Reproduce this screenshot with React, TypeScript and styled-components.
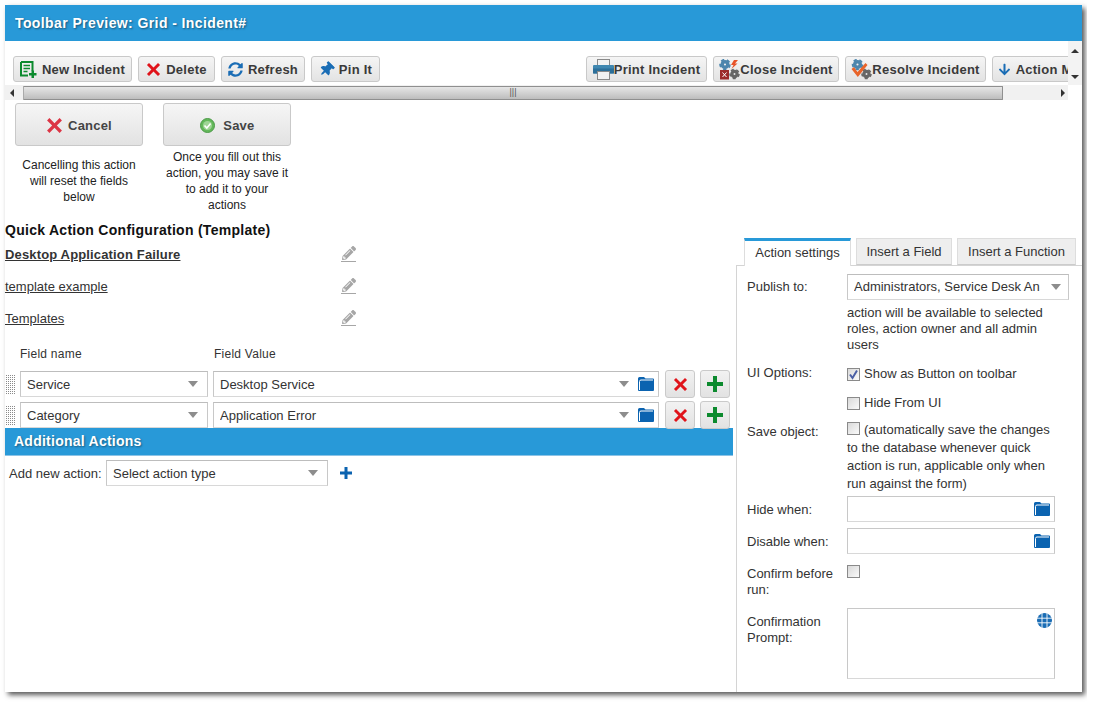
import React from 'react';
import styled, { createGlobalStyle } from 'styled-components';
import { FaArrowDown, FaPencilAlt, FaSyncAlt, FaThumbtack } from 'react-icons/fa';

const GlobalStyle = createGlobalStyle`
  html, body {
    margin: 0;
    background: #fff;
    font-family: "Liberation Sans", Arial, sans-serif;
    color: #333;
  }
`;

const CrossIcon = ({ size, color }: { size: number; color: string }) => (
  <svg width={size} height={size} viewBox="0 0 16 16">
    <path d="M3.200 1 8 5.800 12.800 1 15 3.200 10.200 8 15 12.800 12.800 15 8 10.200 3.200 15 1 12.800 5.800 8 1 3.200Z" fill={color} />
  </svg>
);

const PlusIcon = ({ size, color }: { size: number; color: string }) => (
  <svg width={size} height={size} viewBox="0 0 16 16">
    <path d="M6 0h4v6h6v4h-6v6H6v-6H0V6h6Z" fill={color} />
  </svg>
);

const FolderIcon = () => (
  <svg width="16" height="14" viewBox="0 0 16 14">
    <path d="M1.500 0H6l1.500 1.500H15a1 1 0 0 1 1 1V13a1 1 0 0 1-1 1H1a1 1 0 0 1-1-1V1.500A1.500 1.500 0 0 1 1.500 0Z" fill="#0b63b0" />
    <path d="M1.500 13V4.500A1.500 1.500 0 0 1 3 3h12" fill="none" stroke="#fff" strokeWidth="1" />
  </svg>
);

const GlobeIcon = () => (
  <svg width="15" height="15" viewBox="0 0 15 15">
    <circle cx="7.500" cy="7.500" r="7.500" fill="#1a6db5" />
    <path d="M0 5.200h15M0 9.800h15M5 0v15M10 0v15" stroke="#fff" strokeWidth="0.900" />
  </svg>
);

const NewDocIcon = () => (
  <svg width="17" height="17" viewBox="0 0 17 17">
    <path d="M1 1h11.500v9M8 14.500H1V1" fill="none" stroke="#0c8a2e" strokeWidth="2" />
    <path d="M3.500 4.500h6.500M3.500 7.500h6.500M3.500 10.500h4" stroke="#0c8a2e" strokeWidth="1.500" />
    <path d="M11.500 9.500h2.500v2.500h2.500v2.500H14V17h-2.500v-2.500H9V12h2.500Z" fill="#0c8a2e" />
  </svg>
);

const PrinterIcon = () => (
  <svg width="21" height="21" viewBox="0 0 21 21">
    <rect x="4.500" y="0.500" width="12" height="7" fill="#f2f2f2" stroke="#8a8a8a" />
    <rect x="0" y="6" width="21" height="8.500" rx="1" fill="#3f87b0" />
    <rect x="0" y="9.500" width="21" height="5" fill="#2c6f99" />
    <rect x="4.500" y="12.500" width="12" height="8" fill="#f2f2f2" stroke="#8a8a8a" />
  </svg>
);

const Gear = ({ cx, cy, r, color }: { cx: number; cy: number; r: number; color: string }) => (
  <g>
    <circle cx={cx} cy={cy} r={r * 0.8} fill="none" stroke={color} strokeWidth={r} />
    <circle cx={cx} cy={cy} r={r * 1.4} fill="none" stroke={color} strokeWidth={r * 0.5} strokeDasharray={`${r * 0.95} ${r * 0.8}`} />
  </g>
);

const CloseGearsIcon = () => (
  <svg width="21" height="21" viewBox="0 0 21 21">
    <Gear cx={6} cy={5.500} r={3.500} color="#4c86ad" />
    <Gear cx={15.500} cy={15} r={3.200} color="#666" />
    <path d="M15 1h4l-3 3.500h2.500L12.500 10l2-4h-2.500Z" fill="#e8542a" />
    <rect x="1" y="11" width="9" height="9.500" fill="#9c2a2a" />
    <path d="M3.500 13.500l4 4.500M7.500 13.500l-4 4.500" stroke="#fff" strokeWidth="1" />
  </svg>
);

const ResolveGearsIcon = () => (
  <svg width="21" height="21" viewBox="0 0 21 21">
    <Gear cx={6.500} cy={5.500} r={3.500} color="#4c86ad" />
    <Gear cx={15.500} cy={15} r={3.200} color="#666" />
    <path d="M0.500 10 3 8l3.500 5 8-9 2 2L6.800 18Z" fill="#e8642a" />
  </svg>
);

const SaveIcon = () => (
  <svg width="15" height="15" viewBox="0 0 15 15">
    <circle cx="7.500" cy="7.500" r="7" fill="#63b85a" stroke="#4c9a48" />
    <circle cx="7.500" cy="7.500" r="4.500" fill="#9fd596" />
    <path d="M4.500 7.500 6.800 10l3.800-4.600" fill="none" stroke="#fff" strokeWidth="1.600" />
  </svg>
);

const PencilWithLine = () => (
  <PencilWrap>
    <FaPencilAlt size={14} color="#a6a6a6" />
  </PencilWrap>
);

const Page = styled.div`
  padding: 5px;
  width: 1077px;
  height: 697px;
  overflow: hidden;
`;

const Window = styled.div`
  width: 1077px;
  height: 687px;
  background: #fff;
  box-shadow: 3px 3px 5px rgba(0, 0, 0, 0.65);
  display: flex;
  flex-direction: column;
`;

const TitleBar = styled.div`
  height: 36px;
  flex: none;
  background: #2899d8;
  color: #fff;
  font-size: 14px;
  font-weight: bold;
  line-height: 36px;
  padding-left: 10px;
  letter-spacing: 0.4px;
  text-shadow: 1px 1px 2px rgba(0, 0, 0, 0.45);
`;

const ToolbarArea = styled.div`
  height: 59px;
  flex: none;
  display: grid;
  grid-template-columns: minmax(0, 1fr) 14px;
  grid-template-rows: 44px 15px;
`;

const Toolbar = styled.div`
  display: flex;
  padding: 15px 0 0 8px;
  gap: 6px;
  overflow: hidden;
  min-width: 0;
`;

const ToolGroup = styled.div<{ $offset?: number }>`
  display: flex;
  flex: none;
  gap: 6px;
  margin-left: ${(p) => p.$offset ?? 0}px;
`;

const ToolButton = styled.div<{ $width: number; $tight?: boolean }>`
  flex: none;
  box-sizing: border-box;
  width: ${(p) => p.$width}px;
  height: 26px;
  padding-top: 1px;
  border: 1px solid #c9c9c9;
  border-radius: 3px;
  background: linear-gradient(#f5f5f5, #e3e3e3);
  display: flex;
  align-items: center;
  justify-content: center;
  gap: ${(p) => (p.$tight ? 0 : 5)}px;
  font-size: 13px;
  font-weight: bold;
  letter-spacing: 0.25px;
  color: #3a3a3a;
  white-space: nowrap;
`;

const VScroll = styled.div`
  background: #f3f3f3;
  display: flex;
  flex-direction: column;
  align-items: center;
  justify-content: space-between;
  padding: 8px 1px 6px 0;
  box-sizing: border-box;
`;

const HScroll = styled.div`
  grid-column: 1 / 3;
  display: flex;
  align-items: center;
  background: #f1f1f1;
  height: 15px;
  width: 1063px;
`;

const Thumb = styled.div`
  width: 980px;
  height: 14px;
  box-sizing: border-box;
  border: 1px solid #8f8f8f;
  border-left-color: #aaa;
  border-radius: 1px;
  background: linear-gradient(#e6e6e6, #bdbdbd);
  display: flex;
  align-items: center;
  justify-content: center;
  color: #555;
  font-size: 9px;
  line-height: 1;
`;

const Arrow = styled.span<{ $dir: 'left' | 'right' | 'up' | 'down' }>`
  width: 0;
  height: 0;
  flex: none;
  border-style: solid;
  border-color: transparent;
  ${(p) =>
    p.$dir === 'left'
      ? 'border-width: 4px 4px 4px 0; border-right-color: #333; margin-left: 5px; margin-right: 9px;'
      : p.$dir === 'right'
      ? 'border-width: 4px 0 4px 4px; border-left-color: #333; margin-left: 58px;'
      : p.$dir === 'up'
      ? 'border-width: 0 4px 4px; border-bottom-color: #333;'
      : 'border-width: 4px 4px 0; border-top-color: #333;'}
`;

const Body = styled.div`
  flex: 1;
  display: flex;
  flex-direction: column;
  min-height: 0;
`;

const ActionsRow = styled.div`
  display: flex;
  gap: 20px;
  padding: 3px 0 0 10px;
  height: 122px;
  box-sizing: border-box;
  flex: none;
`;

const ActionCol = styled.div`
  width: 128px;
  display: flex;
  flex-direction: column;
  align-items: center;
`;

const BigButton = styled.div`
  width: 128px;
  height: 43px;
  padding-top: 1px;
  box-sizing: border-box;
  border: 1px solid #c9c9c9;
  border-radius: 3px;
  background: linear-gradient(#f6f6f6, #e2e2e2);
  display: flex;
  align-items: center;
  justify-content: center;
  gap: 5px;
  font-size: 13px;
  font-weight: bold;
  letter-spacing: 0.2px;
  color: #444;
`;

const Caption = styled.div<{ $top: number }>`
  margin-top: ${(p) => p.$top}px;
  width: 128px;
  text-align: center;
  font-size: 12px;
  line-height: 16px;
  color: #222;
`;

const Columns = styled.div`
  flex: 1;
  display: flex;
  min-height: 0;
`;

const LeftColumn = styled.div`
  width: 731px;
  flex: none;
`;

const Heading = styled.div`
  font-size: 14px;
  font-weight: bold;
  color: #111;
  line-height: 16px;
  margin-bottom: 8px;
  letter-spacing: 0.28px;
`;

const TemplateRow = styled.div`
  width: 351px;
  height: 32px;
  display: flex;
  justify-content: space-between;
  align-items: flex-start;
`;

const TemplateLink = styled.a<{ $bold?: boolean }>`
  font-size: 13px;
  font-weight: ${(p) => (p.$bold ? 'bold' : 'normal')};
  letter-spacing: ${(p) => (p.$bold ? 0.15 : 0)}px;
  text-decoration: underline;
  color: #333;
  line-height: 18px;
`;

const PencilWrap = styled.span`
  display: flex;
  flex-direction: column;
  align-items: center;
  width: 15px;
  height: 15px;
  border-bottom: 1px solid #a6a6a6;
`;

const FieldHeader = styled.div`
  display: flex;
  padding-left: 15px;
  font-size: 12px;
  line-height: 16px;
  height: 25px;
  margin-top: 4px;
  color: #333;
  letter-spacing: 0.25px;
`;

const FieldHeaderCell = styled.div<{ $width: number }>`
  width: ${(p) => p.$width}px;
`;

const FieldList = styled.div`
  display: flex;
  flex-direction: column;
  gap: 5px;
`;

const FieldRow = styled.div`
  display: flex;
  align-items: center;
  height: 26px;
`;

const Grip = styled.span`
  width: 10px;
  height: 20px;
  margin: 0 4px 0 1px;
  flex: none;
  background:
    repeating-linear-gradient(90deg, transparent 0 1px, #fff 1px 2px),
    repeating-linear-gradient(0deg, #8a8a8a 0 1px, #fff 1px 2px);
`;

const SelectBox = styled.div<{ $width: number; $left?: number }>`
  box-sizing: border-box;
  width: ${(p) => p.$width}px;
  height: 26px;
  flex: none;
  margin-left: ${(p) => p.$left ?? 0}px;
  border: 1px solid #c8c8c8;
  border-top-color: #bdbdbd;
  border-bottom-color: #d8d8d8;
  background: #fff;
  display: flex;
  align-items: center;
  padding: 0 4px 0 6px;
  font-size: 13px;
  color: #333;
  white-space: nowrap;
`;

const SelectText = styled.span`
  flex: 1;
  overflow: hidden;
`;

const Caret = styled.span<{ $gap?: number }>`
  width: 0;
  height: 0;
  flex: none;
  margin: 0 ${(p) => p.$gap ?? 5}px 0 0;
  border-style: solid;
  border-width: 6px 5px 0;
  border-color: #8d8d8d transparent transparent;
`;

const SquareButton = styled.div<{ $left: number }>`
  width: 30px;
  height: 28px;
  box-sizing: border-box;
  flex: none;
  margin-left: ${(p) => p.$left}px;
  border: 1px solid #cacaca;
  border-radius: 3px;
  background: linear-gradient(#f2f2f2, #e2e2e2);
  display: flex;
  align-items: center;
  justify-content: center;
`;

const SectionBar = styled.div`
  height: 28px;
  box-sizing: border-box;
  width: 728px;
  background: #2899d8;
  border-bottom: 1px solid #8cc3e6;
  color: #fff;
  font-size: 14px;
  font-weight: bold;
  line-height: 27px;
  padding-left: 9px;
  letter-spacing: 0.25px;
  text-shadow: 1px 1px 2px rgba(0, 0, 0, 0.4);
`;

const AddRow = styled.div`
  display: flex;
  align-items: center;
  padding: 4px 0 0 4px;
  font-size: 13px;
`;

const AddLabel = styled.span`
  width: 97px;
  flex: none;
`;

const PlusSlot = styled.span`
  margin-left: 12px;
  display: flex;
`;

const RightColumn = styled.div`
  width: 346px;
  flex: none;
  display: flex;
  flex-direction: column;
  padding-top: 16px;
  box-sizing: border-box;
`;

const Tabs = styled.div`
  height: 27px;
  flex: none;
  display: flex;
  gap: 5px;
  padding-left: 8px;
  position: relative;
  z-index: 1;
`;

const Tab = styled.div<{ $active?: boolean; $width: number }>`
  box-sizing: border-box;
  width: ${(p) => p.$width}px;
  height: ${(p) => (p.$active ? 28 : 27)}px;
  font-size: 13px;
  text-align: center;
  line-height: 26px;
  color: #333;
  ${(p) =>
    p.$active
      ? 'background: #fff; border-top: 3px solid #2899d8; border-left: 1px solid #ddd; border-right: 1px solid #ddd; line-height: 23px;'
      : 'background: #eee; border: 1px solid #ddd; border-bottom: 1px solid #ccc;'}
`;

const Panel = styled.div`
  flex: 1;
  border-top: 1px solid #d4d4d4;
  border-left: 1px solid #d4d4d4;
  padding: 8px 0 0 10px;
  box-sizing: border-box;
  font-size: 13px;
  line-height: 16px;
`;

const FormRow = styled.div<{ $top?: number }>`
  display: flex;
  margin-top: ${(p) => p.$top ?? 0}px;
`;

const FormLabel = styled.div<{ $top?: number }>`
  width: 100px;
  flex: none;
  padding-top: ${(p) => p.$top ?? 0}px;
  color: #333;
`;

const FormValue = styled.div`
  flex: 1;
  min-width: 0;
  max-width: 222px;
`;

const HelpText = styled.div`
  width: 215px;
  margin-top: 5px;
`;

const CheckLine = styled.div<{ $top: number }>`
  display: flex;
  align-items: center;
  gap: 4px;
  height: 16px;
  margin-top: ${(p) => p.$top}px;
`;

const CheckBox = styled.span`
  width: 13px;
  height: 13px;
  box-sizing: border-box;
  flex: none;
  border: 1px solid #8a8a8a;
  background: linear-gradient(135deg, #d9d9d9, #fafafa);
  display: inline-flex;
`;

const SaveNote = styled.div`
  line-height: 18px;
  width: 210px;
`;

const InlineCheck = styled(CheckBox)`
  vertical-align: -1px;
  margin-right: 4px;
`;

const InputBox = styled.div<{ $height?: number }>`
  box-sizing: border-box;
  width: 208px;
  height: ${(p) => p.$height ?? 26}px;
  border: 1px solid #c8c8c8;
  border-bottom-color: #d8d8d8;
  background: #fff;
  display: flex;
  align-items: ${(p) => (p.$height ? 'flex-start' : 'center')};
  justify-content: flex-end;
  padding: ${(p) => (p.$height ? '4px 2px 0 0' : '0 4px 0 0')};
`;

const tools = [
  { label: 'New Incident', width: 119, icon: <NewDocIcon /> },
  { label: 'Delete', width: 77, icon: <CrossIcon size={15} color="#e0131a" /> },
  { label: 'Refresh', width: 84, icon: <FaSyncAlt size={15} color="#1a6db5" /> },
  { label: 'Pin It', width: 69, icon: <FaThumbtack size={15} color="#1a6db5" style={{ transform: 'rotate(45deg)' }} /> },
];

const actionTools = [
  { label: 'Print Incident', width: 121, tight: true, icon: <PrinterIcon /> },
  { label: 'Close Incident', width: 126, tight: true, icon: <CloseGearsIcon /> },
  { label: 'Resolve Incident', width: 141, tight: true, icon: <ResolveGearsIcon /> },
  { label: 'Action Menu', width: 110, tight: false, icon: <FaArrowDown size={13} color="#1a6db5" /> },
];

const fields = [
  { name: 'Service', value: 'Desktop Service' },
  { name: 'Category', value: 'Application Error' },
];

export default function App() {
  return (
    <>
      <GlobalStyle />
      <Page>
        <Window>
          <TitleBar>Toolbar Preview: Grid - Incident#</TitleBar>
          <ToolbarArea>
            <Toolbar>
              <ToolGroup>
                {tools.map((t) => (
                  <ToolButton key={t.label} $width={t.width}>
                    {t.icon}
                    {t.label}
                  </ToolButton>
                ))}
              </ToolGroup>
              <ToolGroup $offset={200}>
                {actionTools.map((t) => (
                  <ToolButton key={t.label} $width={t.width} $tight={t.tight}>
                    {t.icon}
                    {t.label}
                  </ToolButton>
                ))}
              </ToolGroup>
            </Toolbar>
            <VScroll>
              <Arrow $dir="up" />
              <Arrow $dir="down" />
            </VScroll>
            <HScroll>
              <Arrow $dir="left" />
              <Thumb>|||</Thumb>
              <Arrow $dir="right" />
            </HScroll>
          </ToolbarArea>
          <Body>
            <ActionsRow>
              <ActionCol>
                <BigButton>
                  <CrossIcon size={17} color="#dc3545" />
                  Cancel
                </BigButton>
                <Caption $top={11}>
                  Cancelling this action
                  <br />
                  will reset the fields
                  <br />
                  below
                </Caption>
              </ActionCol>
              <ActionCol>
                <BigButton>
                  <SaveIcon />
                  &nbsp;Save
                </BigButton>
                <Caption $top={3}>
                  Once you fill out this
                  <br />
                  action, you may save it
                  <br />
                  to add it to your
                  <br />
                  actions
                </Caption>
              </ActionCol>
            </ActionsRow>
            <Columns>
              <LeftColumn>
                <Heading>Quick Action Configuration (Template)</Heading>
                <TemplateRow>
                  <TemplateLink $bold>Desktop Application Failure</TemplateLink>
                  <PencilWithLine />
                </TemplateRow>
                <TemplateRow>
                  <TemplateLink>template example</TemplateLink>
                  <PencilWithLine />
                </TemplateRow>
                <TemplateRow>
                  <TemplateLink>Templates</TemplateLink>
                  <PencilWithLine />
                </TemplateRow>
                <FieldHeader>
                  <FieldHeaderCell $width={194}>Field name</FieldHeaderCell>
                  <FieldHeaderCell $width={200}>Field Value</FieldHeaderCell>
                </FieldHeader>
                <FieldList>
                  {fields.map((f) => (
                    <FieldRow key={f.name}>
                      <Grip />
                      <SelectBox $width={188}>
                        <SelectText>{f.name}</SelectText>
                        <Caret />
                      </SelectBox>
                      <SelectBox $width={446} $left={5}>
                        <SelectText>{f.value}</SelectText>
                        <Caret $gap={9} />
                        <FolderIcon />
                      </SelectBox>
                      <SquareButton $left={6}>
                        <CrossIcon size={15} color="#e0131a" />
                      </SquareButton>
                      <SquareButton $left={5}>
                        <PlusIcon size={16} color="#0c8a2e" />
                      </SquareButton>
                    </FieldRow>
                  ))}
                </FieldList>
                <SectionBar>Additional Actions</SectionBar>
                <AddRow>
                  <AddLabel>Add new action:</AddLabel>
                  <SelectBox $width={222}>
                    <SelectText>Select action type</SelectText>
                    <Caret />
                  </SelectBox>
                  <PlusSlot>
                    <PlusIcon size={12} color="#0b63b0" />
                  </PlusSlot>
                </AddRow>
              </LeftColumn>
              <RightColumn>
                <Tabs>
                  <Tab $active $width={107}>Action settings</Tab>
                  <Tab $width={96}>Insert a Field</Tab>
                  <Tab $width={119}>Insert a Function</Tab>
                </Tabs>
                <Panel>
                  <FormRow>
                    <FormLabel $top={5}>Publish to:</FormLabel>
                    <FormValue>
                      <SelectBox $width={222}>
                        <SelectText>Administrators, Service Desk An</SelectText>
                        <Caret $gap={3} />
                      </SelectBox>
                      <HelpText>action will be available to selected roles, action owner and all admin users</HelpText>
                    </FormValue>
                  </FormRow>
                  <FormRow $top={12}>
                    <FormLabel>UI Options:</FormLabel>
                    <FormValue>
                      <CheckLine $top={1}>
                        <CheckBox>
                          <svg width="11" height="11" viewBox="0 0 11 11">
                            <path d="M2 5.500 4.500 9 9 1.500" fill="none" stroke="#4a5fa5" strokeWidth="2" />
                          </svg>
                        </CheckBox>
                        Show as Button on toolbar
                      </CheckLine>
                      <CheckLine $top={13}>
                        <CheckBox />
                        Hide From UI
                      </CheckLine>
                    </FormValue>
                  </FormRow>
                  <FormRow $top={10}>
                    <FormLabel $top={3}>Save object:</FormLabel>
                    <FormValue>
                      <SaveNote>
                        <InlineCheck />
                        (automatically save the changes to the database whenever quick action is run, applicable only when run against the form)
                      </SaveNote>
                    </FormValue>
                  </FormRow>
                  <FormRow $top={3}>
                    <FormLabel $top={6}>Hide when:</FormLabel>
                    <FormValue>
                      <InputBox>
                        <FolderIcon />
                      </InputBox>
                    </FormValue>
                  </FormRow>
                  <FormRow $top={6}>
                    <FormLabel $top={6}>Disable when:</FormLabel>
                    <FormValue>
                      <InputBox>
                        <FolderIcon />
                      </InputBox>
                    </FormValue>
                  </FormRow>
                  <FormRow $top={11}>
                    <FormLabel $top={1}>
                      Confirm before
                      <br />
                      run:
                    </FormLabel>
                    <FormValue>
                      <CheckBox />
                    </FormValue>
                  </FormRow>
                  <FormRow $top={10}>
                    <FormLabel $top={6}>
                      Confirmation
                      <br />
                      Prompt:
                    </FormLabel>
                    <FormValue>
                      <InputBox $height={71}>
                        <GlobeIcon />
                      </InputBox>
                    </FormValue>
                  </FormRow>
                </Panel>
              </RightColumn>
            </Columns>
          </Body>
        </Window>
      </Page>
    </>
  );
}
